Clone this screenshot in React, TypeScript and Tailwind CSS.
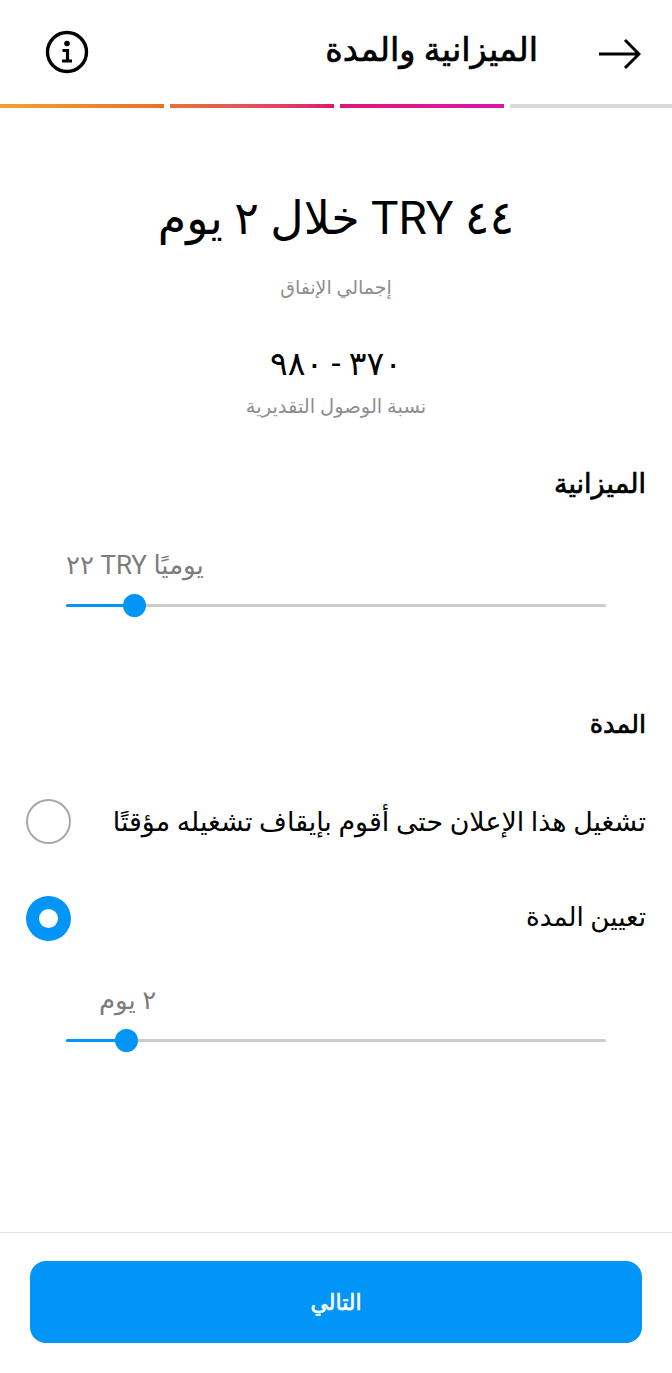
const font = { fontFamily: 'Roboto, "DejaVu Sans", "Noto Sans", sans-serif' };

function Slider({ fill, label, labelPad }: { fill: number; label: string; labelPad: string }) {
  return (
    <div className="px-[66px]">
      <div dir="rtl" className={`text-[26px] leading-[32px] text-[#7c7c7c] ${labelPad}`}>
        {label}
      </div>
      <div className="relative mt-[23px] h-[3px] rounded-full bg-[#cccccc]" dir="ltr">
        <div className="h-[3px] rounded-full bg-[#0095f6]" style={{ width: fill }} />
        <div
          className="absolute top-[-10px] h-[23px] w-[23px] rounded-full bg-[#0095f6]"
          style={{ left: fill - 11 }}
        />
      </div>
    </div>
  );
}

function Radio({ selected }: { selected?: boolean }) {
  if (selected) {
    return (
      <div className="flex h-[45px] w-[45px] items-center justify-center rounded-full bg-[#0095f6]">
        <div className="h-[19px] w-[19px] rounded-full bg-white" />
      </div>
    );
  }
  return <div className="h-[45px] w-[45px] rounded-full border-2 border-[#a8a8a8]" />;
}

export default function App() {
  return (
    <div className="flex h-[1373px] w-[672px] flex-col overflow-hidden bg-white text-black" style={font}>
      {/* Header */}
      <div className="flex h-[104px] items-center justify-between pl-[45px] pr-[31px]">
        <svg width="44" height="44" viewBox="0 0 44 44" fill="none">
          <circle cx="22" cy="22" r="19.5" stroke="black" strokeWidth="3.4" />
          <circle cx="22" cy="13.5" r="2.8" fill="black" />
          <path d="M17.5 20.5h5v10M17 31h10" stroke="black" strokeWidth="3.2" />
        </svg>
        <div className="flex items-center gap-[61px]">
          <h1 dir="rtl" className="mb-[4px] text-[33.5px] leading-[40px] [-webkit-text-stroke:0.7px_black]">
            الميزانية والمدة
          </h1>
          <svg width="42" height="34" viewBox="0 0 42 34" fill="none" className="mt-[4px]">
            <path d="M0 17h40M26 3l14 14-14 14" stroke="black" strokeWidth="3" />
          </svg>
        </div>
      </div>

      {/* Step bars */}
      <div className="flex h-[4px] gap-[6px]">
        <div className="w-[164px] shrink-0 bg-gradient-to-r from-[#f5a030] to-[#e8702a]" />
        <div className="w-[164px] shrink-0 bg-gradient-to-r from-[#e8703a] to-[#e0156e]" />
        <div className="w-[164px] shrink-0 bg-gradient-to-r from-[#e0157a] to-[#d916a8]" />
        <div className="w-[164px] shrink-0 bg-[#dbdbdb]" />
      </div>

      {/* Summary */}
      <div dir="rtl" className="flex flex-col items-center pt-[82px] text-center">
        <div className="text-[46px] leading-[56px]">٤٤ TRY خلال ٢ يوم</div>
        <div className="mt-[28px] text-[19px] leading-[28px] text-[#8e8e8e]">إجمالي الإنفاق</div>
        <div className="mt-[40px] text-[33px] leading-[44px]">٣٧٠ - ٩٨٠</div>
        <div className="mt-[7px] text-[19.5px] leading-[28px] text-[#8e8e8e]">نسبة الوصول التقديرية</div>
      </div>

      {/* Budget */}
      <div dir="rtl" className="mt-[45px] pr-[26px] text-[27px] leading-[36px] [-webkit-text-stroke:0.7px_black]">
        الميزانية
      </div>
      <div className="mt-[47px]">
        <Slider fill={68} label="يوميًا TRY ٢٢" labelPad="text-left" />
      </div>

      {/* Duration */}
      <div dir="rtl" className="mt-[99px] pr-[26px] text-[25.5px] leading-[36px] [-webkit-text-stroke:0.7px_black]">
        المدة
      </div>
      <div className="mt-[57px] flex items-center justify-between pl-[26px] pr-[26px]">
        <Radio />
        <span dir="rtl" className="text-[26.85px] leading-[36px]">
          تشغيل هذا الإعلان حتى أقوم بإيقاف تشغيله مؤقتًا
        </span>
      </div>
      <div className="mt-[52px] flex items-center justify-between pl-[26px] pr-[26px]">
        <Radio selected />
        <span dir="rtl" className="mb-[4px] text-[26.2px] leading-[36px]">
          تعيين المدة
        </span>
      </div>
      <div className="mt-[43px]">
        <Slider fill={60} label="٢ يوم" labelPad="pl-[33px] text-left" />
      </div>

      {/* Footer */}
      <div className="mt-auto h-[141px] border-t border-[#e6e6e6] px-[30px] pt-[28px]">
        <button className="flex h-[82px] w-full items-center justify-center rounded-[16px] bg-[#0095f6] text-[22px] text-white [-webkit-text-stroke:0.6px_white]">
          التالي
        </button>
      </div>
    </div>
  );
}
